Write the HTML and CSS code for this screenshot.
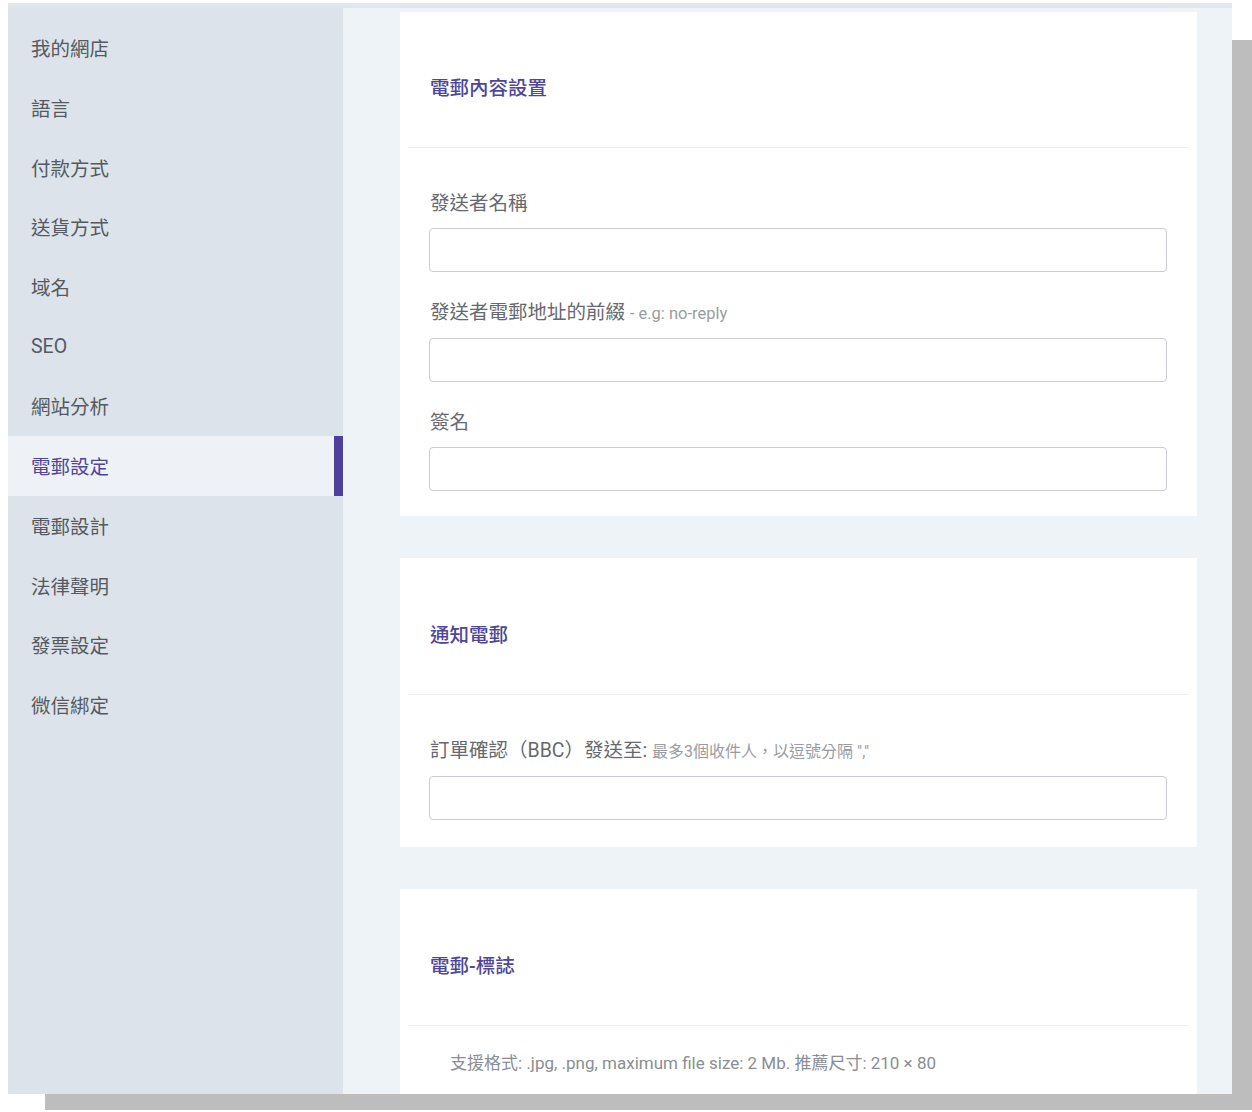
FILE: index.html
```html
<!DOCTYPE html>
<html lang="zh-Hant">
<head>
<meta charset="utf-8">
<title>電郵設定</title>
<link rel="stylesheet" href="styles.css">
</head>
<body>
<div class="stage">
  <div class="window">
    <nav class="sidebar">
      <div class="nav-item">我的網店</div>
      <div class="nav-item">語言</div>
      <div class="nav-item">付款方式</div>
      <div class="nav-item">送貨方式</div>
      <div class="nav-item">域名</div>
      <div class="nav-item">SEO</div>
      <div class="nav-item">網站分析</div>
      <div class="nav-item active">電郵設定</div>
      <div class="nav-item">電郵設計</div>
      <div class="nav-item">法律聲明</div>
      <div class="nav-item">發票設定</div>
      <div class="nav-item">微信綁定</div>
    </nav>
    <main class="main">
      <section class="card">
        <div class="card-head"><h2 class="card-title">電郵內容設置</h2></div>
        <div class="card-divider"></div>
        <div class="card-body">
          <div class="field">
            <label class="label">發送者名稱</label>
            <div class="input"></div>
          </div>
          <div class="field">
            <label class="label">發送者電郵地址的前綴 <span class="hint">- e.g: no-reply</span></label>
            <div class="input"></div>
          </div>
          <div class="field">
            <label class="label">簽名</label>
            <div class="input"></div>
          </div>
        </div>
      </section>
      <section class="card">
        <div class="card-head"><h2 class="card-title">通知電郵</h2></div>
        <div class="card-divider"></div>
        <div class="card-body">
          <div class="field">
            <label class="label">訂單確認（BBC）發送至: <span class="hint small">最多3個收件人，以逗號分隔 ","</span></label>
            <div class="input"></div>
          </div>
        </div>
      </section>
      <section class="card">
        <div class="card-head"><h2 class="card-title">電郵-標誌</h2></div>
        <div class="card-divider"></div>
        <div class="card-note">支援格式: .jpg, .png, maximum file size: 2 Mb. 推薦尺寸: 210 × 80</div>
      </section>
    </main>
  </div>
</div>
</body>
</html>
```
FILE: styles.css
```css
* { box-sizing: border-box; }
html, body { margin: 0; padding: 0; background: #ffffff; }
body {
  font-family: Roboto, "Noto Sans CJK TC", "Noto Sans", sans-serif;
  width: 1252px;
  height: 1112px;
  overflow: hidden;
}
.stage {
  position: relative;
  margin: 3px 0 0 8px;
  width: 1224px;
  height: 1091px;
}
.stage::before {
  content: "";
  position: absolute;
  left: 37px;
  top: 37px;
  right: -20px;
  bottom: -16px;
  background: #bdbdbd;
}
.window {
  position: relative;
  display: flex;
  height: 100%;
  overflow: hidden;
  border-top: 5px solid #e3e6ea;
}
.sidebar {
  width: 335px;
  flex: none;
  background: #dce3ea;
  padding-top: 10px;
}
.nav-item {
  position: relative;
  height: 59.7px;
  display: flex;
  align-items: center;
  padding-left: 23px;
  font-size: 19.5px;
  color: #555a60;
}
.nav-item.active {
  background: #eef2f6;
  color: #4f4699;
}
.nav-item.active::after {
  content: "";
  position: absolute;
  right: 0;
  top: 0;
  bottom: 0;
  width: 9px;
  background: #4e3f9a;
}
.main {
  flex: 1;
  background: #eef3f7;
  padding: 4px 35px 0 57px;
  display: flex;
  flex-direction: column;
  gap: 42px;
}
.card {
  background: #ffffff;
  flex: none;
}
.card-head {
  height: 135px;
  padding: 63px 0 0 30px;
}
.card + .card .card-head {
  height: 136px;
  padding-top: 64px;
}
.card-title {
  margin: 0;
  font-size: 19.5px;
  line-height: 28px;
  font-weight: 500;
  color: #4f4699;
}
.card-divider {
  height: 1px;
  background: #eceef1;
  margin: 0 8px;
}
.card-body {
  padding: 42px 30px 25px 29px;
  display: flex;
  flex-direction: column;
  gap: 27px;
}
.card + .card .card-body {
  padding-bottom: 27px;
}
.field {
  display: flex;
  flex-direction: column;
  gap: 10px;
}
.label {
  font-size: 19.5px;
  line-height: 28px;
  color: #666a70;
  padding-left: 1px;
}
.hint {
  font-size: 16.5px;
  color: #999da2;
}
.hint.small {
  font-size: 16px;
}
.input {
  height: 44px;
  border: 1px solid #cdc9dc;
  border-radius: 4px;
  background: #ffffff;
}
.card-note {
  padding: 25px 0 0 50px;
  font-size: 17px;
  line-height: 24px;
  color: #8a8e93;
  height: 120px;
}
```
